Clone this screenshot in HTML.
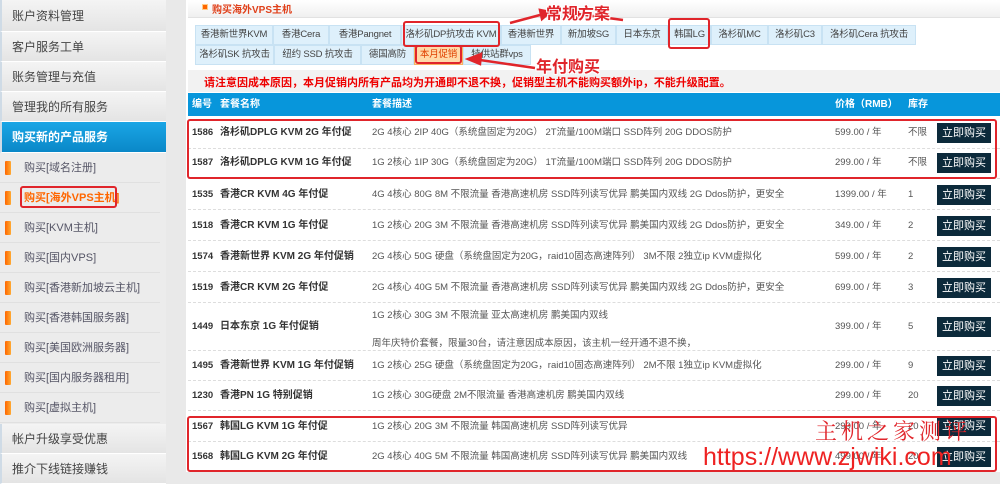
<!DOCTYPE html><html><head><meta charset="utf-8"><style>
*{margin:0;padding:0;box-sizing:border-box}
body{width:1000px;height:472px;overflow:hidden;background:#e9e9e9;font-family:"Liberation Sans","Noto Sans CJK SC",sans-serif;position:relative;color:#333}
.a{position:absolute;white-space:nowrap}
.side{left:0;top:0;width:166px;height:472px;background:#ececec}
.si{position:absolute;left:0;width:166px;height:30px;background:linear-gradient(#f4f4f4,#e4e4e4);border-left:2px solid #cfdbe6;border-bottom:1px solid #fff;font-size:12px;line-height:30px;padding-left:10px;color:#444;white-space:nowrap}
.sub{position:absolute;left:0;width:160px;height:30px;border-bottom:1px solid #e0e0e0;font-size:11px;line-height:30px;padding-left:24px;color:#556;white-space:nowrap}
.sub i{position:absolute;left:5px;top:8px;width:6px;height:14px;background:linear-gradient(90deg,#f60,#fa3);border-radius:1px}
.main{left:186px;top:0;width:814px;height:472px;background:#fff}
.tab{position:absolute;height:20px;background:#def0fb;border:1px solid #c8e2f3;font-size:9.5px;line-height:18px;text-align:center;color:#444;white-space:nowrap;overflow:hidden;letter-spacing:-0.2px}
.th{left:188px;top:93px;width:812px;height:23px;background:#0796db;color:#fff;font-size:10px;font-weight:bold;line-height:23px}
.row{position:absolute;left:188px;width:812px;border-bottom:1px dashed #ddd;font-size:9.5px;color:#555;white-space:nowrap}
.row span{position:absolute}
.row .n{left:4px;font-weight:bold;color:#333}
.row .m{left:32px;font-weight:bold;color:#333;font-size:10px}
.row .d{left:184px}
.row .p{left:647px}
.row .k{left:720px}
.row .b{left:749px;width:54px;height:20px;background:#0c2a3b;color:#fff;font-size:11px;line-height:20px;text-align:center}
.rb{position:absolute;border:2px solid #e0252b;border-radius:3px}
.ann{position:absolute;color:#e0252b;font-weight:bold;font-size:16px;white-space:nowrap;text-shadow:1px 1px 0 #fff,-1px -1px 0 #fff,1px -1px 0 #fff,-1px 1px 0 #fff}
</style></head><body>
<div class="a side"></div>
<div class="si" style="top:0;height:32px;line-height:32px">账户资料管理</div>
<div class="si" style="top:32px">客户服务工单</div>
<div class="si" style="top:62px">账务管理与充值</div>
<div class="si" style="top:92px">管理我的所有服务</div>
<div class="si" style="top:122px;background:linear-gradient(#1aa6e6,#0a88c8);color:#fff;font-weight:bold;height:31px">购买新的产品服务</div>
<div class="sub" style="top:153px"><i></i>购买[域名注册]</div>
<div class="sub" style="top:183px;color:#f60;font-weight:bold"><i></i>购买[海外VPS主机]</div>
<div class="rb" style="left:20px;top:186px;width:97px;height:22px"></div>
<div class="sub" style="top:213px"><i></i>购买[KVM主机]</div>
<div class="sub" style="top:243px"><i></i>购买[国内VPS]</div>
<div class="sub" style="top:273px"><i></i>购买[香港新加坡云主机]</div>
<div class="sub" style="top:303px"><i></i>购买[香港韩国服务器]</div>
<div class="sub" style="top:333px"><i></i>购买[美国欧洲服务器]</div>
<div class="sub" style="top:363px"><i></i>购买[国内服务器租用]</div>
<div class="sub" style="top:393px"><i></i>购买[虚拟主机]</div>
<div class="si" style="top:424px">帐户升级享受优惠</div>
<div class="si" style="top:454px">推介下线链接赚钱</div>

<div class="a main"></div>
<div class="a" style="left:188px;top:0;width:812px;height:18px;background:linear-gradient(#fff,#f0f0f0);border-bottom:1px solid #e2e2e2"></div>
<div class="a" style="left:202px;top:4px;width:6px;height:6px;background:#f60;border:1px solid #fc8"></div>
<div class="a" style="left:212px;top:1px;font-size:10px;color:#e0401a;font-weight:bold">购买海外VPS主机</div>

<div class="a" style="left:188px;top:70px;width:812px;height:22px;background:#f2f2f2"></div>
<div class="a" style="left:204px;top:74px;font-size:11px;color:#e00;font-weight:bold">请注意因成本原因，本月促销内所有产品均为开通即不退不换，促销型主机不能购买额外ip，不能升级配置。</div>

<div class="tab" style="left:195px;top:25px;width:78px">香港新世界KVM</div>
<div class="tab" style="left:273px;top:25px;width:56px">香港Cera</div>
<div class="tab" style="left:329px;top:25px;width:72px">香港Pangnet</div>
<div class="tab" style="left:401px;top:25px;width:100px">洛杉矶DP抗攻击 KVM</div>
<div class="tab" style="left:501px;top:25px;width:60px">香港新世界</div>
<div class="tab" style="left:561px;top:25px;width:55px">新加坡SG</div>
<div class="tab" style="left:616px;top:25px;width:52px">日本东京</div>
<div class="tab" style="left:668px;top:25px;width:43px">韩国LG</div>
<div class="tab" style="left:711px;top:25px;width:57px">洛杉矶MC</div>
<div class="tab" style="left:768px;top:25px;width:54px">洛杉矶C3</div>
<div class="tab" style="left:822px;top:25px;width:94px">洛杉矶Cera 抗攻击</div>
<div class="tab" style="left:195px;top:45px;width:79px">洛杉矶SK 抗攻击</div>
<div class="tab" style="left:274px;top:45px;width:87px">纽约 SSD 抗攻击</div>
<div class="tab" style="left:361px;top:45px;width:53px">德国高防</div>
<div class="tab" style="left:414px;top:45px;width:49px;background:#ffd9a8;border-color:#f8b060;color:#e04000">本月促销</div>
<div class="tab" style="left:463px;top:45px;width:68px">特供站群vps</div>
<div class="rb" style="left:403px;top:21px;width:97px;height:26px"></div>
<div class="rb" style="left:668px;top:18px;width:42px;height:31px"></div>
<div class="rb" style="left:415px;top:45px;width:47px;height:19px"></div>
<svg class="a" style="left:460px;top:0" width="240" height="75"><g stroke="#e0252b" stroke-width="2.5" fill="#e0252b"><line x1="50" y1="23" x2="80" y2="15"/><polygon points="80,10 90,12 82,19"/><line x1="163" y1="20" x2="118" y2="14"/><polygon points="118,9 108,14 118,19"/><line x1="75" y1="68" x2="20" y2="60"/><polygon points="21,54 8,59 20,64"/></g></svg>
<div class="ann" style="left:546px;top:0px">常规方案</div>
<div class="ann" style="left:536px;top:53px">年付购买</div>

<div class="a th"><span class="a" style="left:4px">编号</span><span class="a" style="left:32px">套餐名称</span><span class="a" style="left:184px">套餐描述</span><span class="a" style="left:647px">价格（RMB）</span><span class="a" style="left:720px">库存</span></div>

<div class="row" style="top:119px;height:30px;line-height:28px"><span class="n">1586</span><span class="m">洛杉矶DPLG KVM 2G 年付促</span><span class="d">2G 4核心 2IP 40G（系统盘固定为20G） 2T流量/100M端口 SSD阵列 20G DDOS防护</span><span class="p">599.00 / 年</span><span class="k">不限</span><span class="b" style="top:4px">立即购买</span></div>
<div class="row" style="top:149px;height:30px;line-height:28px"><span class="n">1587</span><span class="m">洛杉矶DPLG KVM 1G 年付促</span><span class="d">1G 2核心 1IP 30G（系统盘固定为20G） 1T流量/100M端口 SSD阵列 20G DDOS防护</span><span class="p">299.00 / 年</span><span class="k">不限</span><span class="b" style="top:4px">立即购买</span></div>
<div class="row" style="top:179px;height:31px;line-height:31px"><span class="n">1535</span><span class="m">香港CR KVM 4G 年付促</span><span class="d">4G 4核心 80G 8M 不限流量 香港高速机房 SSD阵列读写优异 鹏美国内双线 2G Ddos防护，更安全</span><span class="p">1399.00 / 年</span><span class="k">1</span><span class="b" style="top:6px">立即购买</span></div>
<div class="row" style="top:210px;height:31px;line-height:31px"><span class="n">1518</span><span class="m">香港CR KVM 1G 年付促</span><span class="d">1G 2核心 20G 3M 不限流量 香港高速机房 SSD阵列读写优异 鹏美国内双线 2G Ddos防护，更安全</span><span class="p">349.00 / 年</span><span class="k">2</span><span class="b" style="top:6px">立即购买</span></div>
<div class="row" style="top:241px;height:31px;line-height:31px"><span class="n">1574</span><span class="m">香港新世界 KVM 2G 年付促销</span><span class="d">2G 4核心 50G 硬盘（系统盘固定为20G，raid10固态高速阵列） 3M不限 2独立ip KVM虚拟化</span><span class="p">599.00 / 年</span><span class="k">2</span><span class="b" style="top:6px">立即购买</span></div>
<div class="row" style="top:272px;height:31px;line-height:31px"><span class="n">1519</span><span class="m">香港CR KVM 2G 年付促</span><span class="d">2G 4核心 40G 5M 不限流量 香港高速机房 SSD阵列读写优异 鹏美国内双线 2G Ddos防护，更安全</span><span class="p">699.00 / 年</span><span class="k">3</span><span class="b" style="top:6px">立即购买</span></div>
<div class="row" style="top:303px;height:48px;line-height:48px"><span class="n">1449</span><span class="m">日本东京 1G 年付促销</span><span class="d" style="line-height:14px;top:6px">1G 2核心 30G 3M 不限流量 亚太高速机房 鹏美国内双线<br><br>周年庆特价套餐，限量30台，请注意因成本原因，该主机一经开通不退不换，</span><span class="p">399.00 / 年</span><span class="k">5</span><span class="b" style="top:14px">立即购买</span></div>
<div class="row" style="top:351px;height:30px;line-height:30px"><span class="n">1495</span><span class="m">香港新世界 KVM 1G 年付促销</span><span class="d">1G 2核心 25G 硬盘（系统盘固定为20G，raid10固态高速阵列） 2M不限 1独立ip KVM虚拟化</span><span class="p">299.00 / 年</span><span class="k">9</span><span class="b" style="top:5px">立即购买</span></div>
<div class="row" style="top:381px;height:30px;line-height:30px"><span class="n">1230</span><span class="m">香港PN 1G 特别促销</span><span class="d">1G 2核心 30G硬盘 2M不限流量 香港高速机房 鹏美国内双线</span><span class="p">299.00 / 年</span><span class="k">20</span><span class="b" style="top:5px">立即购买</span></div>
<div class="row" style="top:411px;height:31px;line-height:31px"><span class="n">1567</span><span class="m">韩国LG KVM 1G 年付促</span><span class="d">1G 2核心 20G 3M 不限流量 韩国高速机房 SSD阵列读写优异</span><span class="p">299.00 / 年</span><span class="k">20</span><span class="b" style="top:5px">立即购买</span></div>
<div class="row" style="top:442px;height:30px;line-height:30px;border:none"><span class="n">1568</span><span class="m">韩国LG KVM 2G 年付促</span><span class="d">2G 4核心 40G 5M 不限流量 韩国高速机房 SSD阵列读写优异 鹏美国内双线</span><span class="p">499.00 / 年</span><span class="k">20</span><span class="b" style="top:5px">立即购买</span></div>

<div class="rb" style="left:187px;top:119px;width:810px;height:60px"></div>
<div class="rb" style="left:187px;top:416px;width:810px;height:56px"></div>
<div class="a" style="left:815px;top:418px;font-size:22px;line-height:26px;color:#e0252b;letter-spacing:4px;font-family:'Noto Serif CJK SC',serif">主机之家测评</div>
<div class="a" style="left:703px;top:442px;font-size:25px;line-height:30px;color:#ee2222;font-family:'Liberation Sans',sans-serif">https://www.zjwiki.com</div>
</body></html>
